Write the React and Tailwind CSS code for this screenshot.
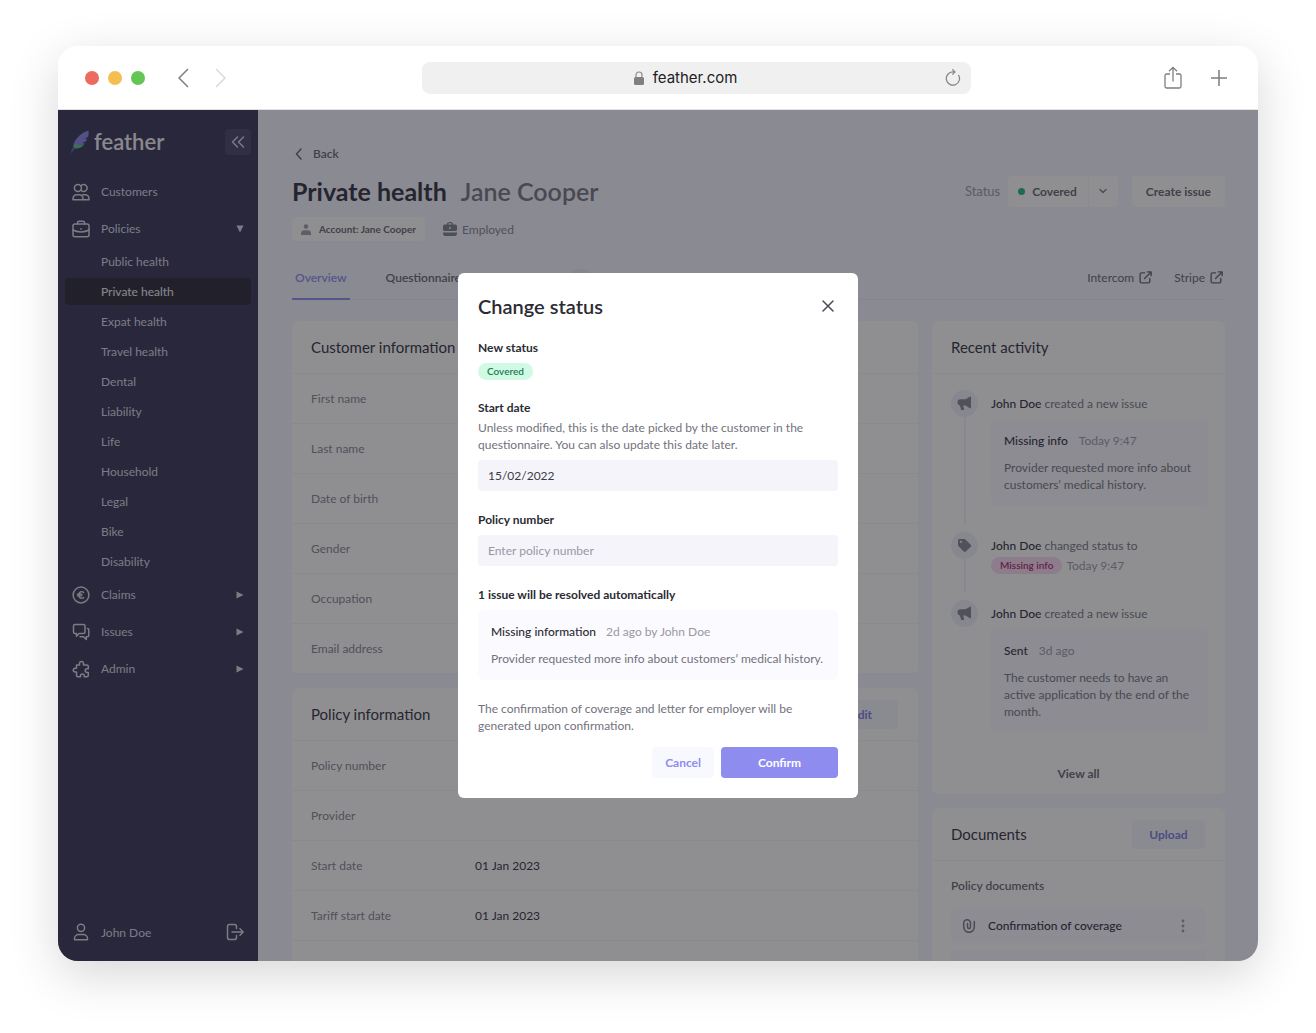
import React, { useState } from "react";

const policyLinks = [
  "Public health",
  "Private health",
  "Expat health",
  "Travel health",
  "Dental",
  "Liability",
  "Life",
  "Household",
  "Legal",
  "Bike",
  "Disability",
];

const customerRows = [
  { label: "First name", value: "" },
  { label: "Last name", value: "" },
  { label: "Date of birth", value: "" },
  { label: "Gender", value: "" },
  { label: "Occupation", value: "" },
  { label: "Email address", value: "" },
];

const policyRows = [
  { label: "Policy number", value: "" },
  { label: "Provider", value: "" },
  { label: "Start date", value: "01 Jan 2023" },
  { label: "Tariff start date", value: "01 Jan 2023" },
];

function Svg({ size = 18, box = 18, className = "", children, ...rest }) {
  return (
    <svg
      width={size}
      height={size}
      viewBox={`0 0 ${box} ${box}`}
      fill="none"
      stroke="currentColor"
      strokeWidth="1.5"
      strokeLinecap="round"
      strokeLinejoin="round"
      aria-hidden="true"
      className={`shrink-0 ${className}`}
      {...rest}
    >
      {children}
    </svg>
  );
}

function FeatherLogo() {
  return (
    <svg width="19" height="24" viewBox="0 0 19 24" aria-hidden="true">
      <path
        d="M18.3.5C12 2.500 5.500 8 3.600 14.200c3.200-.6 6.600-.3 10 .9l1.200-1.900-3-.1 4.300-1.900 1.100-2.400-2.800.1 3.600-2.200c.8-2 .9-4.200.3-6.200z"
        fill="#8583e6"
      />
      <path
        d="M3.600 14.200c3.200-.6 6.600-.3 10 .9-1.600 2.200-4.600 3.700-8.300 3.400l-2-.9c0-1.200 0-2.300.3-3.400z"
        fill="#5fb894"
      />
      <path d="M3.300 17.600l2 .9L.6 23.500c.3-2.200 1.200-4.100 2.700-5.900z" fill="#5d5ba6" />
    </svg>
  );
}

function CustomersIcon() {
  return (
    <Svg>
      <circle cx="5.900" cy="5" r="3.500" />
      <path d="M9 2.700a3.500 3.500 0 1 1 0 4.600" />
      <path d="M1 16.800v-1c0-2.300 1.700-4.100 4-4.100h2c2.300 0 4 1.800 4 4.100v1z" />
      <path d="M10.500 11.700H13c2.300 0 4 1.800 4 4.100v1h-6" />
    </Svg>
  );
}

function BriefcaseIcon() {
  return (
    <Svg>
      <rect x="1" y="4" width="16" height="12.800" rx="2" />
      <path d="M5.500 4V2.600c0-.8.6-1.400 1.400-1.400h4.200c.8 0 1.400.6 1.400 1.400V4" />
      <path d="M1 10c2 1.300 5 1.900 8 1.900s6-.6 8-1.900M9 8.800v.4" />
    </Svg>
  );
}

function EuroIcon() {
  return (
    <Svg>
      <circle cx="9" cy="9" r="7.900" />
      <path
        strokeWidth="1.400"
        d="M11.700 6.500c-.5-.6-1.200-.9-2-.9-1.600 0-2.700 1.500-2.700 3.400s1.100 3.400 2.700 3.400c.8 0 1.500-.3 2-.9M5.500 8.200h4.300M5.500 9.900h4.300"
      />
    </Svg>
  );
}

function IssuesIcon() {
  return (
    <Svg>
      <path d="M3 1.500h8.500c.9 0 1.500.6 1.500 1.500v6c0 .9-.6 1.500-1.500 1.500H7l-2.600 2.600v-2.600H3c-.9 0-1.500-.6-1.500-1.500V3c0-.9.6-1.500 1.500-1.500z" />
      <path d="M15.500 5.500c.8 0 1.300.6 1.300 1.400v5.300c0 .9-.6 1.500-1.500 1.500h-1v2.800l-2.800-2.800H8" />
    </Svg>
  );
}

function PuzzleIcon() {
  return (
    <Svg>
      <path d="M4.500 5h3V3.600a2 2 0 0 1 4 0V5h3.300c.9 0 1.500.6 1.500 1.500v2.200h-1.200a1.900 1.900 0 0 0 0 3.800h1.200v2.800c0 .9-.6 1.500-1.500 1.500h-2.500v-1a1.900 1.900 0 0 0-3.800 0v1H6c-.9 0-1.500-.6-1.500-1.500v-3.300H3.200a1.900 1.900 0 0 1 0-3.800h1.300z" />
    </Svg>
  );
}

function UserIcon() {
  return (
    <Svg>
      <circle cx="9" cy="4.800" r="3.600" />
      <path d="M2.500 16.800v-1c0-2.400 1.900-4.200 4.300-4.200h4.400c2.400 0 4.300 1.800 4.300 4.200v1z" />
    </Svg>
  );
}

function LogoutIcon() {
  return (
    <Svg>
      <path d="M10.500 5.500v-2c0-1.100-.8-1.900-1.900-1.900H3.400c-1.100 0-1.900.8-1.900 1.900v11c0 1.100.8 1.900 1.900 1.900h5.200c1.100 0 1.900-.8 1.900-1.900v-2" />
      <path d="M6 9h11M14 5.800L17.200 9 14 12.200" />
    </Svg>
  );
}

function ExternalIcon() {
  return (
    <Svg size={13} box={14}>
      <path d="M6 2H2.800C2 2 1.200 2.600 1.200 3.400v8c0 .8.6 1.400 1.400 1.400h7.600c.8 0 1.400-.6 1.400-1.400V8M9 .9h4.100V5M13 1L6 8" />
    </Svg>
  );
}

function MegaphoneIcon() {
  return (
    <Svg size={15} box={15} fill="currentColor" stroke="none">
      <path d="M14 1.200c0-.6-.5-.8-1-.5L8.500 3.300H3.500A3 3 0 0 0 .5 6.400c0 1.500.9 2.600 2.300 3l1.300 4c.1.500.5.700 1 .7h1.200c.7 0 1-.5.800-1.100l-1-3.400h2.400l4.500 2.600c.5.300 1 0 1-.5z" />
    </Svg>
  );
}

function TagIcon() {
  return (
    <Svg size={15} box={15} fill="currentColor" stroke="none">
      <path
        fillRule="evenodd"
        d="M1 2.200C1 1.400 1.500.9 2.300.9h4.900c.5 0 .9.2 1.200.5l5.300 5.300c.6.6.6 1.400 0 2l-4.900 4.900c-.6.6-1.400.6-2 0L1.500 8.300C1.200 8 1 7.600 1 7.100zM4 5a1.100 1.100 0 1 0 0-2.200A1.100 1.100 0 0 0 4 5z"
      />
    </Svg>
  );
}

function ClipIcon() {
  return (
    <Svg size={14} box={14}>
      <path d="M12.300 2.500V8a5.300 5.300 0 0 1-10.600 0V4.200a3.400 3.400 0 0 1 6.800 0V8a1.500 1.500 0 0 1-3 0V4.500" />
    </Svg>
  );
}

function BrowserBar() {
  return (
    <header className="flex h-16 shrink-0 items-center border-b border-[#e2e2e2] bg-white text-[#7d7d7d]">
      <div className="flex w-[364px] shrink-0 items-center pl-[27px]">
        <div className="flex gap-[9px]">
          <span className="size-3.5 rounded-full bg-[#ed6a5f]" />
          <span className="size-3.5 rounded-full bg-[#f5bf4f]" />
          <span className="size-3.5 rounded-full bg-[#62c554]" />
        </div>
        <button type="button" aria-label="Previous page" className="ml-[33px]">
          <svg width="11" height="20" viewBox="0 0 11 20" fill="none" stroke="#7d7d7d" strokeWidth="1.500">
            <path d="M10 1L1 10l9 9" />
          </svg>
        </button>
        <button type="button" aria-label="Next page" className="ml-[26px]">
          <svg width="11" height="20" viewBox="0 0 11 20" fill="none" stroke="#d9d9d9" strokeWidth="1.500">
            <path d="M1 1l9 9-9 9" />
          </svg>
        </button>
      </div>
      <div className="flex h-8 flex-1 items-center rounded-lg bg-[#f0f0f0] pr-2.5 pl-1">
        <div className="flex flex-1 items-center justify-center gap-[9px]">
          <svg width="10" height="14" viewBox="0 0 10 14" aria-hidden="true">
            <path d="M2 6.500V4a3 3 0 0 1 6 0v2.500" fill="none" stroke="#8a8a8a" strokeWidth="1.200" />
            <rect y="6" width="10" height="8" rx="1.500" fill="#808080" />
          </svg>
          <span className="font-['Inter',sans-serif] text-[15px] text-[#222222]">feather.com</span>
        </div>
        <button type="button" aria-label="Reload">
          <svg width="16" height="18" viewBox="0 0 16 18" fill="none" stroke="#8a8a8a" strokeWidth="1.300">
            <path d="M13.400 5.800A6.600 6.600 0 1 1 8 2.900h2M7.300.3L10 2.900 7.300 5.600" />
          </svg>
        </button>
      </div>
      <div className="flex w-[287px] shrink-0 items-center justify-end gap-[29px] pr-[31px]">
        <button type="button" aria-label="Share">
          <svg width="18" height="24" viewBox="0 0 18 24" fill="none" stroke="currentColor" strokeWidth="1.300">
            <path d="M6 8H2.500C1.600 8 1 8.600 1 9.500v11c0 .9.600 1.500 1.500 1.500h13c.9 0 1.500-.6 1.500-1.500v-11c0-.9-.6-1.500-1.500-1.500H12M9 15.500V1.500M5 5.300l4-4 4 4" />
          </svg>
        </button>
        <button type="button" aria-label="New tab">
          <svg width="16" height="16" viewBox="0 0 16 16" fill="none" stroke="currentColor" strokeWidth="1.500">
            <path d="M8 0v16M0 8h16" />
          </svg>
        </button>
      </div>
    </header>
  );
}

function NavItem({ icon, label, arrow }) {
  return (
    <a href="#" className="flex h-[37px] items-center pr-3.5 pl-3.5">
      {icon}
      <span className="ml-[11px] flex-1">{label}</span>
      {arrow === "down" && (
        <svg width="8" height="8" viewBox="0 0 8 8" fill="currentColor" aria-hidden="true">
          <path d="M.5.500h7L4 7.500z" />
        </svg>
      )}
      {arrow === "right" && (
        <svg width="8" height="8" viewBox="0 0 8 8" fill="currentColor" aria-hidden="true">
          <path d="M.5.500v7L7.500 4z" />
        </svg>
      )}
    </a>
  );
}

function Sidebar() {
  return (
    <aside className="flex w-[200px] shrink-0 flex-col bg-[#312f51] text-[#d8d8e2]">
      <div className="flex items-center pt-[19px] pr-[7px] pl-3">
        <FeatherLogo />
        <span className="ml-[5px] flex-1 text-[22px] leading-6 font-semibold text-[#f0f0f4]">
          feather
        </span>
        <button
          type="button"
          aria-label="Collapse menu"
          className="flex size-[26px] items-center justify-center rounded bg-[#413f60]"
        >
          <Svg size={14} box={14}>
            <path d="M6.500 2L1.500 7l5 5M12.500 2l-5 5 5 5" />
          </Svg>
        </button>
      </div>

      <nav className="mt-[18px]">
        <NavItem icon={<CustomersIcon />} label="Customers" />
        <NavItem icon={<BriefcaseIcon />} label="Policies" arrow="down" />
        <div className="flex flex-col gap-[3px] px-[7px] py-px">
          {policyLinks.map((link) => (
            <a
              key={link}
              href="#"
              className={`flex h-[27px] items-center rounded pl-9 ${
                link === "Private health" ? "bg-[#242231] text-[#f0f0f4]" : ""
              }`}
            >
              {link}
            </a>
          ))}
        </div>
        <NavItem icon={<EuroIcon />} label="Claims" arrow="right" />
        <NavItem icon={<IssuesIcon />} label="Issues" arrow="right" />
        <NavItem icon={<PuzzleIcon />} label="Admin" arrow="right" />
      </nav>

      <div className="mt-auto mb-5 flex items-center px-3.5">
        <UserIcon />
        <span className="ml-[11px] flex-1">John Doe</span>
        <button type="button" aria-label="Log out">
          <LogoutIcon />
        </button>
      </div>
    </aside>
  );
}

function PageHeader() {
  return (
    <>
      <a href="#" className="flex items-center gap-2 self-start font-semibold text-[#62626c]">
        <Svg size={12} box={12} className="ml-px">
          <path d="M8 1L3.500 6 8 11" />
        </Svg>
        Back
      </a>
      <div className="mt-[13px] flex items-center justify-between">
        <h1 className="flex gap-3.5 text-[25px] leading-8 font-bold text-[#2b2b38]">
          Private health <span className="font-semibold text-[#72727c]">Jane Cooper</span>
        </h1>
        <div className="flex items-center font-bold text-[#62626c]">
          <span className="mr-2 text-[13px] font-normal text-[#9898a4]">Status</span>
          <button type="button" className="flex h-[31px] items-center rounded-l bg-white pr-[11px] pl-2.5">
            <span className="mr-[7px] size-[7px] rounded-full bg-[#1eb482]" />
            Covered
          </button>
          <button
            type="button"
            aria-label="Change status"
            className="mr-3.5 ml-px flex h-[31px] w-[29px] items-center justify-center rounded-r bg-white text-[#7c7c88]"
          >
            <Svg size={8} box={8}>
              <path d="M1 2.500l3 3 3-3" />
            </Svg>
          </button>
          <button type="button" className="h-[31px] rounded bg-white px-3.5">
            Create issue
          </button>
        </div>
      </div>
      <div className="mt-2.5 flex items-center">
        <a
          href="#"
          className="flex h-6 items-center gap-2 rounded-sm bg-white px-[9px] text-[10px] font-bold text-[#62626c]"
        >
          <svg width="10" height="11" viewBox="0 0 10 11" fill="#9d9daa" aria-hidden="true">
            <circle cx="5" cy="2.500" r="2.300" />
            <path d="M0 11V9.500C0 7.500 1.500 6.300 3.500 6.300h3c2 0 3.500 1.200 3.500 3.200V11z" />
          </svg>
          Account: Jane Cooper
        </a>
        <span className="ml-[18px] flex items-center gap-[5px] text-[#82828c]">
          <svg width="14" height="14" viewBox="0 0 14 14" fill="#7c7c88" aria-hidden="true">
            <path
              fillRule="evenodd"
              d="M3.800 2.500C3.800 1.100 4.900 0 6.300 0h1.400c1.400 0 2.500 1.100 2.500 2.500h2C13.200 2.500 14 3.300 14 4.300v3.200c0 .8-.7 1.500-1.500 1.500h-11C.7 9 0 8.300 0 7.500V4.300c0-1 .8-1.800 1.800-1.800zm1.400 0h3.600c0-.7-.5-1.200-1.200-1.200H6.400c-.7 0-1.200.5-1.200 1.200zM7 7a1 1 0 1 0 0-2 1 1 0 0 0 0 2z"
            />
            <path d="M0 10.500h14v1.300c0 1.200-1 2.200-2.200 2.200H2.200C1 14 0 13 0 11.800z" />
          </svg>
          Employed
        </span>
      </div>
    </>
  );
}

function Tabs() {
  return (
    <div className="mt-4 flex h-[43px] shrink-0 border-b border-[#ebebf5] font-semibold text-[#62626c]">
      <a
        href="#"
        className="-mb-px flex items-center border-b-2 border-[#8c8af0] px-[3px] text-[#8c8af0]"
      >
        Overview
      </a>
      <a href="#" className="ml-9 flex items-center pb-0.5">
        Questionnaire
      </a>
      <a href="#" className="ml-9 flex items-center pb-0.5">
        Documents
        <span className="ml-3 w-[22px] rounded-full bg-[#ebebf5] text-center">2</span>
      </a>
      <a href="#" className="ml-9 flex items-center pb-0.5">
        Activity
      </a>
      <div className="ml-auto flex items-center gap-[22px] pr-0.5 pb-0.5 font-normal">
        <a href="#" className="flex items-center gap-[5px]">
          Intercom <ExternalIcon />
        </a>
        <a href="#" className="flex items-center gap-[5px]">
          Stripe <ExternalIcon />
        </a>
      </div>
    </div>
  );
}

function Card({ title, action, className = "", children }) {
  return (
    <section className={`rounded-md bg-white ${className}`}>
      <div className="flex h-[53px] items-center justify-between border-b border-[#f2f2f7] pr-5 pl-[19px]">
        <h2 className="text-[15px] text-[#2b2b38]">{title}</h2>
        {action && (
          <button
            type="button"
            className="h-[29px] w-[73px] rounded bg-[#f5f4fd] font-bold text-[#7c79e0]"
          >
            {action}
          </button>
        )}
      </div>
      {children}
    </section>
  );
}

function InfoTable({ rows }) {
  return (
    <table className="w-full border-separate border-spacing-0">
      <tbody>
        {rows.map((row) => (
          <tr key={row.label}>
            <th
              scope="row"
              className="h-[50px] w-[163px] border-b border-[#f2f2f7] pl-[19px] text-left font-normal text-[#82828c]"
            >
              {row.label}
            </th>
            <td className="border-b border-[#f2f2f7] pl-5 text-[#2b2b38]">{row.value}</td>
          </tr>
        ))}
      </tbody>
    </table>
  );
}

function ActivityItem({ icon, action, last, children }) {
  return (
    <li className="flex gap-[13px]">
      <div className="flex w-[27px] shrink-0 flex-col items-center">
        <span className="flex size-[27px] items-center justify-center rounded-full bg-[#efeefa] text-[#82828f]">
          {icon}
        </span>
        {!last && <span className="mb-[7px] w-0.5 flex-1 bg-[#f2f1fa]" />}
      </div>
      <div className={`flex-1 pt-[5px] ${last ? "" : "pb-[26px]"}`}>
        <p className="text-[#72727c]">
          <span className="font-medium text-[#2b2b38]">John Doe</span> {action}
        </p>
        {children}
      </div>
    </li>
  );
}

function ActivityNote({ title, time, text }) {
  return (
    <div className="mt-[7px] rounded-md bg-[#f9f8fe] p-[13px]">
      <p className="flex gap-[11px] text-[#9898a4]">
        <span className="font-medium text-[#2b2b38]">{title}</span> {time}
      </p>
      <p className="mt-2.5 text-[#72727c]">{text}</p>
    </div>
  );
}

function RecentActivity() {
  return (
    <Card title="Recent activity">
      <ul className="pt-4 pr-[17px] pl-[19px]">
        <ActivityItem icon={<MegaphoneIcon />} action="created a new issue">
          <ActivityNote
            title="Missing info"
            time="Today 9:47"
            text="Provider requested more info about customers’ medical history."
          />
        </ActivityItem>
        <ActivityItem icon={<TagIcon />} action="changed status to">
          <p className="mt-[3px] flex gap-1 text-[#9898a4]">
            <span className="rounded-full bg-[#fbd9f0] px-[9px] text-[10px] font-semibold text-[#a81e64]">
              Missing info
            </span>
            Today 9:47
          </p>
        </ActivityItem>
        <ActivityItem icon={<MegaphoneIcon />} action="created a new issue" last>
          <ActivityNote
            title="Sent"
            time="3d ago"
            text="The customer needs to have an active application by the end of the month."
          />
        </ActivityItem>
      </ul>
      <button type="button" className="mt-8 mb-3 block w-full font-bold text-[#62626c]">
        View all
      </button>
    </Card>
  );
}

function DocumentRow({ name }) {
  return (
    <li className="flex h-[35px] items-center rounded bg-[#f9f8fe] pr-5 pl-[11px] text-[#72727c]">
      <ClipIcon />
      <span className="ml-3 flex-1 font-medium text-[#2b2b38]">{name}</span>
      <button type="button" aria-label="More actions">
        <svg width="4" height="14" viewBox="0 0 4 14" fill="#9898a4">
          <circle cx="2" cy="2" r="1.400" />
          <circle cx="2" cy="7" r="1.400" />
          <circle cx="2" cy="12" r="1.400" />
        </svg>
      </button>
    </li>
  );
}

function StatusDialog({ onClose }) {
  const [startDate, setStartDate] = useState("15/02/2022");
  const [policyNumber, setPolicyNumber] = useState("");

  const handleSubmit = (e) => {
    e.preventDefault();
    onClose();
  };

  return (
    <div className="absolute inset-0 flex items-center justify-center bg-[#1f2026]/50">
      <form
        role="dialog"
        aria-labelledby="dialog-title"
        onSubmit={handleSubmit}
        className="w-[400px] rounded-md bg-white px-5 pt-[21px] pb-5 text-[#72727c]"
      >
        <div className="flex items-center justify-between">
          <h2 id="dialog-title" className="text-xl leading-6 font-semibold text-[#2b2b33]">
            Change status
          </h2>
          <button type="button" aria-label="Close" onClick={onClose} className="mr-1 text-[#4b4b55]">
            <Svg size={12} box={12}>
              <path d="M1 1l10 10M11 1L1 11" />
            </Svg>
          </button>
        </div>

        {/* New status */}
        <p className="mt-[21px] font-bold text-[#2b2b33]">New status</p>
        <span className="mt-[7px] block w-fit rounded-full bg-[#d0fae4] px-[9px] text-[10px] font-semibold text-[#1d7a55]">
          Covered
        </span>

        {/* Start date */}
        <label htmlFor="start-date" className="mt-[19px] block font-bold text-[#2b2b33]">
          Start date
        </label>
        <p className="mt-[3px]">
          Unless modified, this is the date picked by the customer in the questionnaire. You can
          also update this date later.
        </p>
        <input
          id="start-date"
          type="text"
          value={startDate}
          onChange={(e) => setStartDate(e.target.value)}
          className="mt-[7px] block h-[31px] w-full rounded bg-[#f5f4fa] px-2.5 text-[#3b3b44]"
        />

        {/* Policy number */}
        <label htmlFor="policy-number" className="mt-5 block font-bold text-[#2b2b33]">
          Policy number
        </label>
        <input
          id="policy-number"
          type="text"
          placeholder="Enter policy number"
          value={policyNumber}
          onChange={(e) => setPolicyNumber(e.target.value)}
          className="mt-[7px] block h-[31px] w-full rounded bg-[#f5f4fa] px-2.5 text-[#3b3b44] placeholder:text-[#9898a2]"
        />

        {/* Issues */}
        <p className="mt-5 font-bold text-[#2b2b33]">1 issue will be resolved automatically</p>
        <div className="mt-[7px] rounded-md bg-[#fbfaff] p-[13px]">
          <p className="flex gap-2.5 text-[#9898a2]">
            <span className="font-medium text-[#2b2b33]">Missing information</span> 2d ago by John
            Doe
          </p>
          <p className="mt-2.5">Provider requested more info about customers’ medical history.</p>
        </div>

        <p className="mt-5">
          The confirmation of coverage and letter for employer will be generated upon confirmation.
        </p>
        <div className="mt-[13px] flex justify-end gap-[7px] font-bold">
          <button
            type="button"
            onClick={onClose}
            className="h-[31px] rounded bg-[#f8f8ff] px-[13px] text-[#8f8cf0]"
          >
            Cancel
          </button>
          <button type="submit" className="h-[31px] w-[117px] rounded bg-[#8f8cf0] text-white">
            Confirm
          </button>
        </div>
      </form>
    </div>
  );
}

export default function App() {
  const [dialogOpen, setDialogOpen] = useState(true);

  return (
    <div className="h-screen bg-white px-[58px] pt-[46px] pb-[72px] font-['Lato',sans-serif] text-xs leading-[17px]">
      <div className="flex h-full flex-col overflow-hidden rounded-[20px] shadow-[0_14px_50px_rgba(0,0,0,0.16)]">
        <BrowserBar />
        <div className="relative flex min-h-0 flex-1">
          <Sidebar />
          <main className="flex min-w-0 flex-1 flex-col overflow-hidden bg-[#f5f4ff] pt-[35px] pr-[33px] pl-[34px]">
            <PageHeader />
            <Tabs />
            <div className="mt-[21px] flex gap-3.5">
              <div className="flex min-w-0 flex-1 flex-col gap-3.5">
                <Card title="Customer information">
                  <InfoTable rows={customerRows} />
                </Card>
                <Card title="Policy information" action="Edit" className="flex-1">
                  <InfoTable rows={policyRows} />
                </Card>
              </div>
              <div className="flex w-[293px] shrink-0 flex-col gap-3.5">
                <RecentActivity />
                <Card title="Documents" action="Upload">
                  <div className="pt-4 pr-5 pb-5 pl-[19px]">
                    <h3 className="font-semibold text-[#62626c]">Policy documents</h3>
                    <ul className="mt-3.5 flex flex-col gap-[7px]">
                      <DocumentRow name="Confirmation of coverage" />
                      {/* empty slot for the next document */}
                      <li className="h-[35px] rounded bg-[#f9f8fe]" />
                    </ul>
                  </div>
                </Card>
              </div>
            </div>
          </main>
          {dialogOpen && <StatusDialog onClose={() => setDialogOpen(false)} />}
        </div>
      </div>
    </div>
  );
}
